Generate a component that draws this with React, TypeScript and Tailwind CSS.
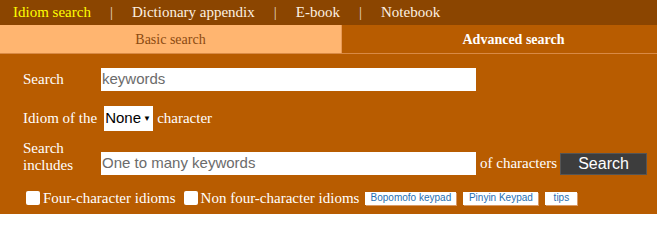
import React from 'react';

const serif = { fontFamily: '"Liberation Serif", "Times New Roman", serif' };

const navItems = ['Idiom search', 'Dictionary appendix', 'E-book', 'Notebook'];

const Keypad = ({ label, w }: { label: string; w: string }) => (
  <span
    className={`inline-flex ${w} h-[13px] items-center justify-center bg-white text-[10px] leading-none text-[#1f6fb2] shadow-[1px_1px_0_#d99a66] font-['Liberation_Sans',Arial,sans-serif]`}
  >
    {label}
  </span>
);

const Box = () => <span className="inline-block h-[14px] w-[14px] rounded-[2px] bg-white" />;

export default function App() {
  return (
    <div className="w-[657px] h-[214px] bg-[#b85c00] text-white" style={serif}>
      {/* top nav */}
      <div className="flex h-[25px] items-center bg-[#8b4500] pl-[13px] text-[15px] leading-none">
        {navItems.map((item, i) => (
          <React.Fragment key={item}>
            {i > 0 && <span className="mx-[19px] text-[#e8d8c8]">|</span>}
            <span className={i === 0 ? 'text-[#ffff00]' : 'text-[#fdf1e0]'}>{item}</span>
          </React.Fragment>
        ))}
      </div>

      {/* tabs */}
      <div className="flex h-[29px] border-b border-[#d98a45] text-[14px]">
        <div className="flex w-[342px] items-center justify-center border-r border-[#e89a55] bg-[#ffb570] text-[#8b4a10]">
          Basic search
        </div>
        <div className="flex flex-1 items-center justify-center pl-[28px] font-bold text-white">Advanced search</div>
      </div>

      <div className="pl-[23px] pt-[14px] text-[15px]">
        <div className="flex h-[23px] items-center">
          <span className="w-[78px]">Search</span>
          <div className="flex h-[23px] w-[375px] items-center bg-white pl-[1px] text-[15px] text-[#6b6b6b] font-['Liberation_Sans',Arial,sans-serif]">
            keywords
          </div>
        </div>

        <div className="mt-[15px] flex h-[25px] items-center">
          <span>Idiom of the</span>
          <span className="ml-[7px] flex h-[25px] w-[49px] items-center bg-white pl-[1px] text-[15px] text-black font-['Liberation_Sans',Arial,sans-serif]">
            None<span className="ml-[2px] text-[8px]">▼</span>
          </span>
          <span className="ml-[4px]">character</span>
        </div>

        <div className="mt-[9px] flex items-start">
          <span className="w-[78px] leading-[17px]">
            Search
            <br />
            includes
          </span>
          <div className="mt-[12px] flex items-center">
            <div className="flex h-[23px] w-[375px] items-center bg-white pl-[1px] text-[15px] text-[#6b6b6b] font-['Liberation_Sans',Arial,sans-serif]">
              One to many keywords
            </div>
            <span className="ml-[4px]">of characters</span>
            <button className="ml-[3px] flex h-[22px] w-[87px] items-center justify-center border border-[#555] bg-[#3d3d3d] text-[16px] text-white font-['Liberation_Sans',Arial,sans-serif]">
              Search
            </button>
          </div>
        </div>

        <div className="mt-[12px] flex items-center pl-[3px]">
          <Box />
          <span className="ml-[3px]">Four-character idioms</span>
          <span className="ml-[8px] flex">
            <Box />
          </span>
          <span className="ml-[3px]">Non four-character idioms</span>
          <span className="ml-[6px] flex gap-[7px]">
            <Keypad label="Bopomofo keypad" w="w-[91px]" />
            <Keypad label="Pinyin Keypad" w="w-[75px]" />
            <Keypad label="tips" w="w-[32px]" />
          </span>
        </div>
      </div>
    </div>
  );
}
